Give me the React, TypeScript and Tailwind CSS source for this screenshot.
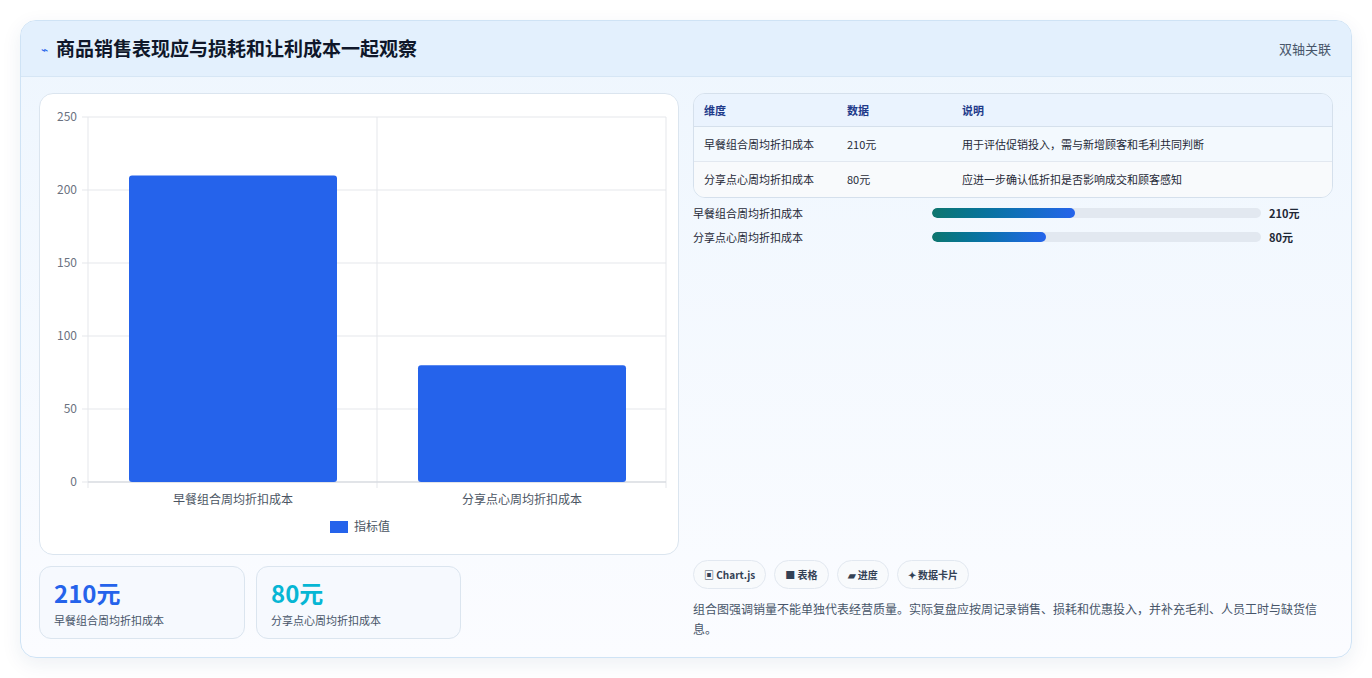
import React from "react";

const F = { fontFamily: '"Noto Sans CJK SC", "Noto Sans", sans-serif' };

function Chart() {
  const x0 = 48, x1 = 626, yT = 23, yB = 388;
  const ticks = [250, 200, 150, 100, 50, 0];
  const y = (v: number) => yB - (v / 250) * (yB - yT);
  return (
    <svg width="640" height="462" className="block">
      {ticks.map((t) => (
        <g key={t}>
          <line x1={x0 - 6} x2={x1} y1={y(t)} y2={y(t)} stroke="#e5e7eb" />
          <text x={x0 - 11} y={y(t) + 4} textAnchor="end" fontSize="12" fill="#6b7280" style={F}>{t}</text>
        </g>
      ))}
      <line x1={x0} x2={x0} y1={yT} y2={yB + 6} stroke="#e5e7eb" />
      <line x1={337} x2={337} y1={yT} y2={yB + 6} stroke="#e5e7eb" />
      <line x1={x1} x2={x1} y1={yT} y2={yB + 6} stroke="#e5e7eb" />
      <line x1={x0} x2={x1} y1={yB} y2={yB} stroke="#d1d5db" />
      <rect x={89} y={y(210)} width={208} height={yB - y(210)} rx="3" fill="#2563eb" />
      <rect x={378} y={y(80)} width={208} height={yB - y(80)} rx="3" fill="#2563eb" />
      <text x={193} y={410} textAnchor="middle" fontSize="12" fill="#4b5563" style={F}>早餐组合周均折扣成本</text>
      <text x={482} y={410} textAnchor="middle" fontSize="12" fill="#4b5563" style={F}>分享点心周均折扣成本</text>
      <rect x={290} y={427} width={18} height={12} fill="#2563eb" />
      <text x={314} y={437} fontSize="12" fill="#4b5563" style={F}>指标值</text>
    </svg>
  );
}

export default function App() {
  return (
    <div style={F} className="w-[1372px] h-[678px] bg-white pt-[20px] px-[20px]">
      <div className="w-[1332px] h-[638px] rounded-[16px] border border-[#cfe3f5] bg-gradient-to-b from-[#eef6fe] to-[#fbfcff] shadow-[0_6px_20px_rgba(30,64,120,0.08)] overflow-hidden flex flex-col">
        <div className="h-[56px] bg-[#e3f0fd] border-b border-[#d6e6f5] flex items-center justify-between px-[20px]">
          <div className="flex items-center gap-[8px]">
            <span className="text-[#2563eb] text-[12px]">⌁</span>
            <span className="text-[19px] font-bold text-[#0f172a]">商品销售表现应与损耗和让利成本一起观察</span>
          </div>
          <span className="text-[13px] text-[#475569]">双轴关联</span>
        </div>
        <div className="flex gap-[14px] px-[18px] pt-[16px]">
          <div className="w-[640px] flex flex-col gap-[11px]">
            <div className="h-[462px] rounded-[14px] bg-white border border-[#dbe5ef]"><Chart /></div>
            <div className="flex gap-[11px]">
              <div className="w-[206px] h-[73px] rounded-[12px] border border-[#dbe5ef] bg-[#f6f9fe] px-[14px] pt-[10px]">
                <div className="text-[24px] font-bold text-[#2563eb] leading-[32px]">210元</div>
                <div className="text-[11px] text-[#475569] mt-[3px]">早餐组合周均折扣成本</div>
              </div>
              <div className="w-[205px] h-[73px] rounded-[12px] border border-[#dbe5ef] bg-[#f6f9fe] px-[14px] pt-[10px]">
                <div className="text-[24px] font-bold text-[#06b6d4] leading-[32px]">80元</div>
                <div className="text-[11px] text-[#475569] mt-[3px]">分享点心周均折扣成本</div>
              </div>
            </div>
          </div>
          <div className="w-[640px] flex flex-col h-[546px]">
            <div className="rounded-[12px] border border-[#d5e0ec] overflow-hidden text-[11px] text-[#1f2937]">
              <div className="flex h-[33px] items-center bg-[#eaf3fe] text-[#1e3a8a] font-bold border-b border-[#d5e0ec]">
                <div className="w-[153px] pl-[10px]">维度</div><div className="w-[115px]">数据</div><div>说明</div>
              </div>
              <div className="flex h-[35px] items-center bg-[#f3f9fe] border-b border-[#e2e8f0]">
                <div className="w-[153px] pl-[10px]">早餐组合周均折扣成本</div><div className="w-[115px]">210元</div><div>用于评估促销投入，需与新增顾客和毛利共同判断</div>
              </div>
              <div className="flex h-[35px] items-center bg-[#f8fafc]">
                <div className="w-[153px] pl-[10px]">分享点心周均折扣成本</div><div className="w-[115px]">80元</div><div>应进一步确认低折扣是否影响成交和顾客感知</div>
              </div>
            </div>
            <div className="mt-[8px] flex flex-col gap-[10px] text-[11px] text-[#1f2937]">
              {[["早餐组合周均折扣成本", 143, "210元"], ["分享点心周均折扣成本", 114, "80元"]].map(([l, w, v]) => (
                <div key={l as string} className="flex items-center h-[14px]">
                  <div className="w-[239px]">{l}</div>
                  <div className="w-[329px] h-[10px] rounded-full bg-[#e2e8f0] overflow-hidden">
                    <div className="h-full rounded-full bg-gradient-to-r from-[#0f766e] to-[#2563eb]" style={{ width: w as number }} />
                  </div>
                  <div className="ml-[8px] font-bold">{v}</div>
                </div>
              ))}
            </div>
            <div className="mt-auto">
              <div className="flex gap-[8px] text-[10px] font-bold text-[#334155]">
                {["▣ Chart.js", "■ 表格", "▰ 进度", "✦ 数据卡片"].map((t) => (
                  <span key={t} className="h-[29px] px-[10px] rounded-full border border-[#e2e8f0] bg-[#f8fafc] flex items-center">{t}</span>
                ))}
              </div>
              <p className="mt-[10px] text-[12px] leading-[20px] text-[#475569]">组合图强调销量不能单独代表经营质量。实际复盘应按周记录销售、损耗和优惠投入，并补充毛利、人员工时与缺货信息。</p>
            </div>
          </div>
        </div>
      </div>
    </div>
  );
}
